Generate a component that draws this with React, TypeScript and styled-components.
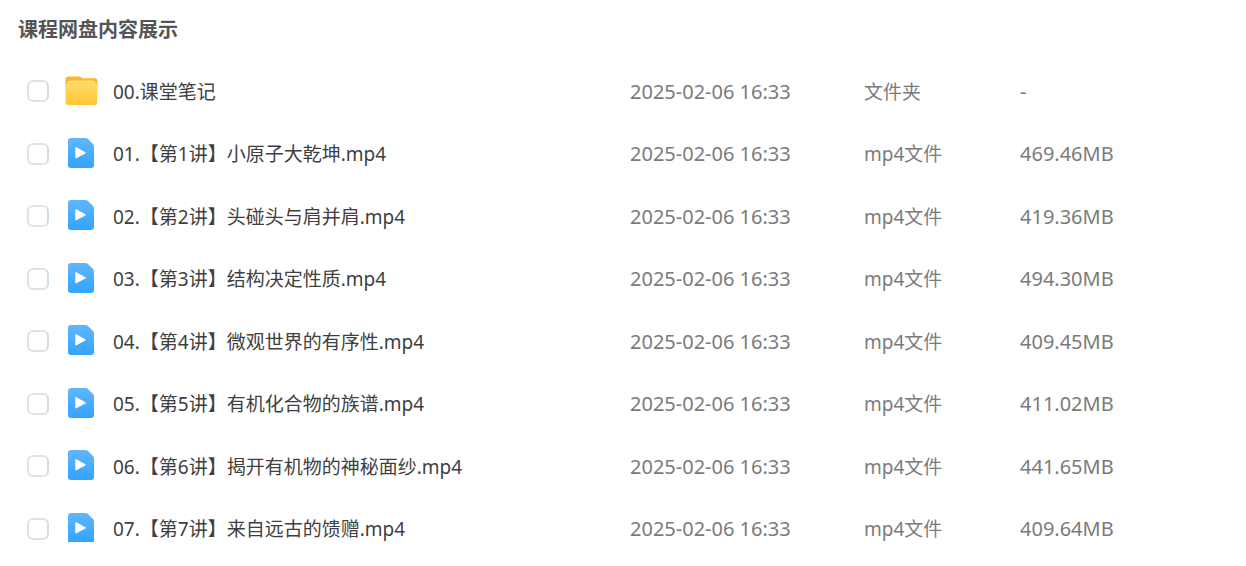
import React from "react";
import styled, { createGlobalStyle } from "styled-components";

const GlobalStyle = createGlobalStyle`
  *, *::before, *::after { box-sizing: border-box; }
  body {
    margin: 0;
    background: #fff;
    font-family: "Noto Sans", "Noto Sans CJK SC", sans-serif;
    color: #3f3f3f;
  }
`;

const Page = styled.main`
  padding: 15px 0 4px;
`;

const Title = styled.h1`
  margin: 0 0 15px;
  padding-left: 18px;
  font-size: 20px;
  line-height: 30px;
  font-weight: 700;
  color: #555;
`;

const FileTable = styled.table`
  width: 100%;
  table-layout: fixed;
  border-collapse: collapse;
`;

const Col = styled.col<{ $width?: number }>`
  width: ${(p) => (p.$width ? `${p.$width}px` : "auto")};
`;

const Row = styled.tr`
  height: 62px;
  &:nth-child(even) { height: 63px; }
`;

const Cell = styled.td`
  padding: 0;
  text-align: left;
  vertical-align: middle;
  white-space: nowrap;
  line-height: 28px;
`;

const CheckCell = styled(Cell)`
  padding-left: 27px;
`;

const NameCell = styled(Cell)`
  padding-top: 1px;
  font-size: 19px;
  overflow: hidden;
  text-overflow: ellipsis;
`;

const InfoCell = styled(Cell)<{ $size: number }>`
  padding-top: 1px;
  font-size: ${(p) => p.$size}px;
  color: #7b7b7b;
`;

const Check = styled.input`
  appearance: none;
  display: block;
  width: 22px;
  height: 22px;
  margin: 0;
  border: 2px solid #e2e2e2;
  border-right-color: #cfdde9;
  border-radius: 6px;
  background: #fff;
  &:checked { background: #3aa5ff; }
`;

const Icon = styled.svg`
  display: block;
`;

const FolderIcon = () => (
  <Icon width="34" height="32" viewBox="0 0 34 32" aria-hidden="true">
    <defs>
      <linearGradient id="folder" x1="0" y1="0" x2="0" y2="1">
        <stop offset="0" stopColor="#ffdc69" />
        <stop offset="1" stopColor="#ffc637" />
      </linearGradient>
    </defs>
    <path d="M0.5 4Q0.5 1.5 3 1.5H14Q15.5 1.5 16.5 2.5T19 3.3H30Q32.3 3.3 32.3 5.5V14H0.5Z" fill="#f7b92f" />
    <path
      d="M0.5 10Q2.5 9 2.8 7.3Q3.2 5.8 5 5.8H28Q29.6 5.8 30 7.3Q30.3 9 32.3 10V27Q32.3 30 29.3 30H3.5Q0.5 30 0.5 27Z"
      fill="url(#folder)"
    />
    <path d="M3.2 7.4Q3.6 6.3 5 6.3H28Q29.2 6.3 29.6 7.4" fill="none" stroke="#ffe68d" />
  </Icon>
);

const VideoIcon = ({ cut }: { cut?: boolean }) => (
  <Icon width="34" height="32" viewBox="0 0 34 32" aria-hidden="true">
    <defs>
      <linearGradient id="video" x1="0" y1="0" x2="0" y2="1">
        <stop offset="0" stopColor="#60b6fc" />
        <stop offset="1" stopColor="#32a4ff" />
      </linearGradient>
    </defs>
    <path
      d={
        cut
          ? "M3 3Q3 0 6 0H20Q22 0 23 1L28 6Q29 7 29 9V29H3Z"
          : "M3 3Q3 0 6 0H20Q22 0 23 1L28 6Q29 7 29 9V27Q29 30 26 30H6Q3 30 3 27Z"
      }
      fill="url(#video)"
    />
    <path d="M11 10L20 14.8L11 19.6Z" fill="#fff" stroke="#fff" strokeWidth="1.5" strokeLinejoin="round" />
  </Icon>
);

type FileItem = { name: string; folder?: boolean; size: string };

const MODIFIED = "2025-02-06 16:33";

const files: FileItem[] = [
  { name: "00.课堂笔记", folder: true, size: "-" },
  { name: "01.【第1讲】小原子大乾坤.mp4", size: "469.46MB" },
  { name: "02.【第2讲】头碰头与肩并肩.mp4", size: "419.36MB" },
  { name: "03.【第3讲】结构决定性质.mp4", size: "494.30MB" },
  { name: "04.【第4讲】微观世界的有序性.mp4", size: "409.45MB" },
  { name: "05.【第5讲】有机化合物的族谱.mp4", size: "411.02MB" },
  { name: "06.【第6讲】揭开有机物的神秘面纱.mp4", size: "441.65MB" },
  { name: "07.【第7讲】来自远古的馈赠.mp4", size: "409.64MB" },
];

export default function App() {
  return (
    <Page lang="zh-CN">
      <GlobalStyle />
      <Title>课程网盘内容展示</Title>
      <FileTable>
        <colgroup>
          <Col $width={65} />
          <Col $width={48} />
          <Col />
          <Col $width={234} />
          <Col $width={156} />
          <Col $width={226} />
        </colgroup>
        <tbody>
          {files.map((file, i) => (
            <Row key={file.name}>
              <CheckCell>
                <Check type="checkbox" id={`file-${i}`} />
              </CheckCell>
              <Cell>{file.folder ? <FolderIcon /> : <VideoIcon cut={i === files.length - 1} />}</Cell>
              <NameCell>
                <label htmlFor={`file-${i}`}>{file.name}</label>
              </NameCell>
              <InfoCell $size={20}>{MODIFIED}</InfoCell>
              <InfoCell $size={19}>{file.folder ? "文件夹" : "mp4文件"}</InfoCell>
              <InfoCell $size={20}>{file.size}</InfoCell>
            </Row>
          ))}
        </tbody>
      </FileTable>
    </Page>
  );
}
